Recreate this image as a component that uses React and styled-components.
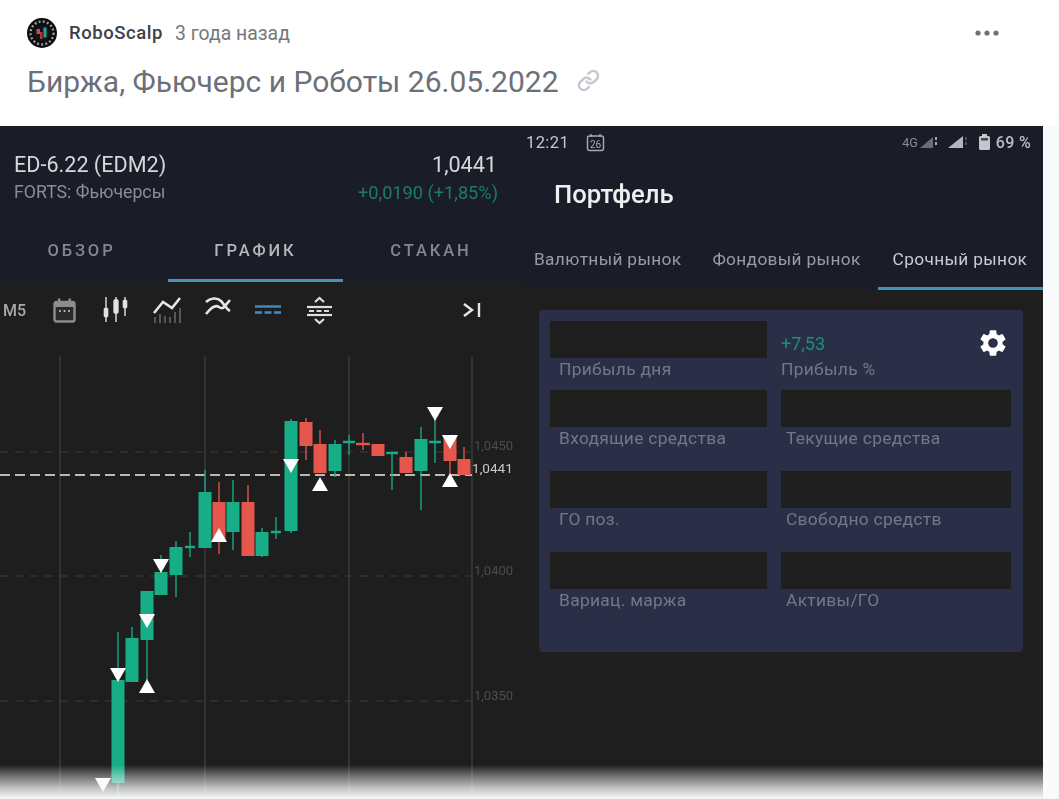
import React from "react";
import styled, { createGlobalStyle, css } from "styled-components";
import { Link } from "lucide-react";
import { MdSettings } from "react-icons/md";

const Global = createGlobalStyle`
  html, body { margin: 0; padding: 0; background: #fff; }
  body { font-family: Roboto, "Noto Sans", sans-serif; }
`;

const soft = css`filter: blur(0.55px);`;

const Page = styled.div`
  position: relative;
  width: 1059px;
  height: 799px;
  overflow: hidden;
  display: flex;
  flex-direction: column;
  background: #fff;
`;
const Header = styled.header`
  height: 126px;
  flex: none;
  box-sizing: border-box;
  padding: 17px 59px 0 27px;
`;
const MetaRow = styled.div`
  display: flex;
  align-items: center;
  height: 32px;
`;
const Avatar = styled.svg`
  width: 30px;
  height: 30px;
  flex: none;
`;
const Author = styled.span`
  margin-left: 12px;
  font-size: 18.5px;
  letter-spacing: 0.55px;
  font-weight: 500;
  color: #3c4048;
`;
const Ago = styled.span`
  margin-left: 12px;
  font-size: 19.4px;
  color: #74787f;
`;
const Dots = styled.svg`
  margin-left: auto;
  width: 26px;
  height: 8px;
`;
const TitleRow = styled.div`
  display: flex;
  align-items: center;
  margin-top: 15px;
  height: 34px;
`;
const Title = styled.h1`
  margin: 0;
  font-size: 30px;
  font-weight: 400;
  color: #6c7079;
  white-space: nowrap;
`;
const LinkMark = styled(Link)`
  margin-left: 18px;
  margin-top: -2px;
  color: #c5c8cf;
`;

const Video = styled.main`
  flex: 1;
  display: flex;
  background: #f9fafb;
  min-height: 0;
`;
const LeftPane = styled.section`
  width: 520px;
  flex: none;
  display: flex;
  flex-direction: column;
  background: #1e1e1e;
`;
const RightPane = styled.section`
  width: 523px;
  flex: none;
  display: flex;
  flex-direction: column;
  background: #1e1e1e;
`;
const LeftHead = styled.div`
  height: 156px;
  flex: none;
  box-sizing: border-box;
  background: #1a1d27;
  display: flex;
  flex-direction: column;
`;
const Quote = styled.div`
  display: grid;
  grid-template-columns: 1fr auto;
  padding: 25px 23px 0 14px;
  row-gap: 2px;
  align-items: center;
`;
const Symbol = styled.div`
  font-size: 21.6px;
  line-height: 28px;
  color: #d6d7da;
  ${soft}
`;
const Market = styled.div`
  font-size: 17.7px;
  line-height: 23px;
  color: #8b8d94;
  ${soft}
`;
const Price = styled(Symbol)`
  text-align: right;
`;
const Change = styled(Market)`
  text-align: right;
  font-size: 18.2px;
  color: #1b7d62;
  margin-right: -1px;
`;
const LeftTabs = styled.div`
  margin-top: auto;
  display: grid;
  grid-template-columns: 168px 175px 176px;
  height: 59px;
`;
const LeftTab = styled.div`
  display: flex;
  align-items: center;
  justify-content: center;
  box-sizing: border-box;
  padding: 0 ${(p) => (p.$first ? "5px" : "0")} 1px 0;
  font-size: 16.5px;
  font-weight: 500;
  letter-spacing: 2.9px;
  color: ${(p) => (p.$active ? "#b4b6ba" : "#85878e")};
  border-bottom: 3px solid ${(p) => (p.$active ? "#4a93b8" : "transparent")};
  span { ${soft} }
`;
const Toolbar = styled.div`
  height: 58px;
  flex: none;
  display: flex;
  align-items: center;
  padding-left: 3px;
  box-sizing: border-box;
  padding-bottom: 2px;
`;
const Interval = styled.span`
  font-size: 16px;
  font-weight: 500;
  color: #a9a9a9;
  width: 26px;
  ${soft}
`;
const Tool = styled.svg`
  flex: none;
  margin-left: ${(p) => p.$gap}px;
  overflow: visible;
  ${soft}
`;
const Chart = styled.svg`
  display: block;
  flex: 1;
  min-height: 0;
  width: 520px;
  ${soft}
`;

const StatusBar = styled.div`
  height: 32px;
  display: flex;
  align-items: center;
  padding: 0 12px 0 6px;
  color: #c4c6cc;
  ${soft}
`;
const Clock = styled.span`
  font-size: 16.5px;
  letter-spacing: 0.4px;
`;
const DateIcon = styled.svg`
  margin-left: 17px;
  width: 19px;
  height: 19px;
`;
const StatusGroup = styled.div`
  margin-left: auto;
  display: flex;
  align-items: center;
`;
const Net = styled.span`
  font-size: 12.5px;
  color: #8a8c93;
`;
const Signals = styled.svg`
  width: 50px;
  height: 16px;
`;
const Battery = styled.svg`
  width: 11px;
  height: 16px;
  margin-left: 11px;
`;
const Percent = styled.span`
  font-size: 16px;
  font-weight: 500;
  margin-left: 6px;
  letter-spacing: 0.3px;
  color: #bcbec4;
`;
const RightHead = styled.div`
  background: #1a1d27;
  height: 164px;
  flex: none;
  display: flex;
  flex-direction: column;
`;
const PortfolioTitle = styled.h2`
  margin: 16px 0 0 34px;
  font-size: 25.7px;
  line-height: 40px;
  font-weight: 500;
  color: #efeff1;
  ${soft}
`;
const Markets = styled.div`
  margin-top: auto;
  display: flex;
  height: 55px;
  padding-left: 14px;
`;
const MarketTab = styled.div`
  box-sizing: border-box;
  height: 100%;
  display: flex;
  align-items: center;
  font-size: 17.3px;
  letter-spacing: 0.35px;
  white-space: nowrap;
  padding-bottom: 7px;
  margin-right: 31px;
  color: ${(p) => (p.$active ? "#c9cbd0" : "#9a9ca2")};
  ${(p) =>
    p.$active &&
    css`
      flex: 1;
      margin: 0 0 0 -14px;
      padding-left: 15px;
      border-bottom: 3px solid #3f93b5;
      padding-bottom: 4px;
    `}
  span { ${soft} }
`;
const Panel = styled.div`
  position: relative;
  margin: 20px 0 0 19px;
  width: 484px;
  height: 342px;
  box-sizing: border-box;
  padding: 11px 12px 0 11px;
  background: #2a2f47;
  border-radius: 4px;
  display: grid;
  grid-template-columns: 217px 230px;
  column-gap: 14px;
  grid-template-rows: 69px 81px 81px 81px;
  align-content: start;
`;
const Cell = styled.div`
  display: flex;
  flex-direction: column;
`;
const Masked = styled.div`
  height: 36.5px;
  flex: none;
  background: #1e1e1e;
`;
const Gain = styled.div`
  height: 36.5px;
  flex: none;
  box-sizing: border-box;
  padding-top: 13px;
  font-size: 18px;
  line-height: 20px;
  color: #1c8f7a;
  ${soft}
`;
const Caption = styled.div`
  margin: 1px 0 0 ${(p) => p.$indent}px;
  font-size: 17.4px;
  line-height: 20px;
  letter-spacing: 0.3px;
  white-space: nowrap;
  color: #737789;
  ${soft}
`;
const Gear = styled(MdSettings)`
  position: absolute;
  top: 17px;
  right: 14px;
  color: #fff;
`;
const Fade = styled.div`
  position: absolute;
  left: 0;
  right: 0;
  bottom: 0;
  height: 34px;
  background: linear-gradient(to bottom, rgba(249, 250, 251, 0) 0%, rgba(249, 250, 251, 0.35) 30%, rgba(249, 250, 251, 0.75) 68%, rgba(249, 250, 251, 1) 100%);
  pointer-events: none;
`;

const GREEN = "#17ad87";
const RED = "#e5574d";
const candles = [
  [118, 680, 783, 632, 799, GREEN],
  [132, 638, 682, 627, 682, GREEN],
  [147, 591, 640, 591, 692, GREEN],
  [161, 572, 595, 555, 595, GREEN],
  [176, 547, 575, 541, 597, GREEN],
  [205, 492, 548, 470, 548, GREEN],
  [219, 502, 542, 482, 554, RED],
  [233, 502, 532, 480, 550, GREEN],
  [248, 502, 556, 485, 556, RED],
  [262, 532, 556, 528, 557, GREEN],
  [291, 421, 531, 419, 533, GREEN],
  [306, 422, 446, 418, 460, RED],
  [320, 444, 473, 430, 473, RED],
  [335, 444, 471, 440, 477, GREEN],
  [378, 444, 456, 444, 456, RED],
  [406, 457, 473, 452, 473, RED],
  [421, 439, 471, 427, 510, GREEN],
  [450, 437, 461, 437, 475, RED],
  [464, 459, 475, 447, 475, RED],
];
const crosses = [
  [190, 532, 557, 547, 5, GREEN],
  [276, 517, 539, 532, 5, GREEN],
  [349, 435, 455, 442, 6, GREEN],
  [363, 433, 450, 444, 7, RED],
  [392, 452, 490, 453, 6, GREEN],
  [435, 418, 463, 442, 6, GREEN],
];
const downs = [[291, 459], [435, 407], [450, 435], [118, 668], [147, 614], [161, 559], [103, 778]];
const ups = [[320, 491], [450, 487], [147, 693], [219, 542]];

function ChartArt() {
  return (
    <Chart viewBox="0 340 520 459" preserveAspectRatio="none">
      {[60, 205, 349, 472].map((x) => (
        <line key={x} x1={x} x2={x} y1="356" y2="799" stroke="#3b3b3b" strokeWidth="1.4" />
      ))}
      {[452, 576, 701].map((y) => (
        <line key={y} x1="0" x2="472" y1={y} y2={y} stroke="#3d3d3d" strokeWidth="1.2" strokeDasharray="8 7" />
      ))}
      <line x1="0" x2="472" y1="475" y2="475" stroke="#b9b9b4" strokeWidth="1.8" strokeDasharray="10 5" />
      {candles.map(([x, t, b, wt, wb, c]) => (
        <g key={x}>
          <line x1={x} x2={x} y1={wt} y2={wb} stroke={c} strokeWidth="1.6" opacity="0.85" />
          <rect x={x - 6.5} y={t} width="13" height={b - t} fill={c} />
        </g>
      ))}
      {crosses.map(([x, t, b, y, w, c]) => (
        <g key={x}>
          <line x1={x} x2={x} y1={t} y2={b} stroke={c} strokeWidth="1.6" opacity="0.85" />
          <rect x={x - w} y={y - 1.2} width={w * 2} height="2.4" fill={c} />
        </g>
      ))}
      {downs.map(([x, y]) => (
        <polygon key={`d${x}`} points={`${x - 8},${y} ${x + 8},${y} ${x},${y + 14}`} fill="#fff" />
      ))}
      {ups.map(([x, y]) => (
        <polygon key={`u${x}`} points={`${x - 8},${y} ${x + 8},${y} ${x},${y - 14}`} fill="#fff" />
      ))}
      <g fontFamily="Roboto, sans-serif" fontSize="13">
        <text x="474" y="450" fill="#4d4d4d">1,0450</text>
        <text x="472" y="472.5" fontSize="13.6" fill="#c9c9c9">1,0441</text>
        <text x="474" y="575" fill="#4d4d4d">1,0400</text>
        <text x="474" y="700" fill="#4d4d4d">1,0350</text>
      </g>
    </Chart>
  );
}

const cells = [
  ["Входящие средства", "Текущие средства"],
  ["ГО поз.", "Свободно средств"],
  ["Вариац. маржа", "Активы/ГО"],
];

export default function App() {
  return (
    <Page>
      <Global />
      <Header>
        <MetaRow>
          <Avatar viewBox="0 0 30 30">
            <circle cx="15" cy="15" r="15" fill="#0c0c0e" />
            <circle cx="15" cy="15" r="11.5" fill="none" stroke="#9a9a9a" strokeWidth="2.4" strokeDasharray="2 2.2" />
            <circle cx="15" cy="15" r="8.5" fill="#0d1420" />
            <rect x="9.5" y="11" width="3.5" height="5" fill="#d8453c" />
            <rect x="13" y="14" width="2.5" height="7" fill="#b5382f" />
            <rect x="16.5" y="9.5" width="3" height="10" fill="#22a78a" />
          </Avatar>
          <Author>RoboScalp</Author>
          <Ago>3 года назад</Ago>
          <Dots viewBox="0 0 26 8">
            <circle cx="4" cy="4" r="2.6" fill="#6d7078" />
            <circle cx="13" cy="4" r="2.6" fill="#6d7078" />
            <circle cx="22" cy="4" r="2.6" fill="#6d7078" />
          </Dots>
        </MetaRow>
        <TitleRow>
          <Title>Биржа, Фьючерс и Роботы 26.05.2022</Title>
          <LinkMark size={23} strokeWidth={2.6} />
        </TitleRow>
      </Header>
      <Video>
        <LeftPane>
          <LeftHead>
            <Quote>
              <Symbol>ED-6.22 (EDM2)</Symbol>
              <Price>1,0441</Price>
              <Market>FORTS: Фьючерсы</Market>
              <Change>+0,0190 (+1,85%)</Change>
            </Quote>
            <LeftTabs>
              <LeftTab $first><span>ОБЗОР</span></LeftTab>
              <LeftTab $active><span>ГРАФИК</span></LeftTab>
              <LeftTab><span>СТАКАН</span></LeftTab>
            </LeftTabs>
          </LeftHead>
          <Toolbar>
            <Interval>M5</Interval>
            <Tool $gap={24} width="23" height="25" viewBox="0 0 23 25">
              <rect x="1.5" y="4" width="20" height="19.5" rx="2" fill="#2a2a2a" stroke="#8d8d8d" strokeWidth="2.4" />
              <rect x="1.5" y="4" width="20" height="5" fill="#8d8d8d" />
              <rect x="5" y="0.5" width="2.4" height="4" fill="#8d8d8d" />
              <rect x="15.5" y="0.5" width="2.4" height="4" fill="#8d8d8d" />
              <circle cx="7" cy="13" r="1" fill="#ccc" /><circle cx="11.5" cy="13" r="1" fill="#ccc" /><circle cx="16" cy="13" r="1" fill="#ccc" />
            </Tool>
            <Tool $gap={27} width="26" height="26" viewBox="0 0 26 26" stroke="#e2e2e2" fill="#e2e2e2">
              <line x1="3" x2="3" y1="0" y2="25" strokeWidth="1.4" />
              <rect x="1" y="11" width="4" height="9" rx="1" strokeWidth="0.6" />
              <line x1="13" x2="13" y1="0" y2="25" strokeWidth="1.4" />
              <rect x="11" y="3" width="4" height="13" rx="1" fill="#e2e2e2" strokeWidth="1.3" />
              <line x1="22" x2="22" y1="0" y2="19" strokeWidth="1.4" />
              <rect x="20" y="3" width="4" height="8" rx="1" strokeWidth="0.6" />
            </Tool>
            <Tool $gap={23} width="29" height="26" viewBox="0 0 29 26">
              <g stroke="#666" strokeWidth="1.6">
                <line x1="3" x2="3" y1="20" y2="26" />
                <line x1="8" x2="8" y1="17" y2="26" />
                <line x1="13" x2="13" y1="19" y2="26" />
                <line x1="18" x2="18" y1="20" y2="26" />
                <line x1="23" x2="23" y1="15" y2="26" />
                <line x1="28" x2="28" y1="11" y2="26" />
              </g>
              <polyline points="2,16 11,5 20,11 28,1" fill="none" stroke="#e8e8e8" strokeWidth="2.6" />
            </Tool>
            <Tool $gap={24} width="26" height="26" viewBox="0 0 26 26">
              <path d="M1 5C5 1 12 0 16 4S21 12 25 14" fill="none" stroke="#e4e4e4" strokeWidth="2.6" />
              <path d="M1 17C5 12 10 7 14 10S19 10 25 3" fill="none" stroke="#e4e4e4" strokeWidth="2.6" />
            </Tool>
            <Tool $gap={24} width="26" height="10" viewBox="0 0 26 10">
              <line x1="0" x2="26" y1="1.5" y2="1.5" stroke="#3f8dc2" strokeWidth="2.4" />
              <line x1="0" x2="26" y1="7.5" y2="7.5" stroke="#3f8dc2" strokeWidth="2.6" strokeDasharray="7 2.5" />
            </Tool>
            <Tool $gap={26} width="25" height="27" viewBox="0 0 25 27" fill="none" stroke="#dedede">
              <polyline points="8,5 12.5,1 17,5" strokeWidth="2.2" />
              <line x1="0" x2="25" y1="10" y2="10" strokeWidth="2.2" />
              <line x1="2" x2="23" y1="14" y2="14" strokeWidth="2.2" strokeDasharray="5 2.5" />
              <line x1="0" x2="25" y1="18" y2="18" strokeWidth="2.2" />
              <polyline points="8,22 12.5,26 17,22" strokeWidth="2.2" />
            </Tool>
            <Tool $gap={131} width="18" height="16" viewBox="0 0 18 16" fill="none" stroke="#e6e6e6" strokeWidth="2.4">
              <polyline points="1,2 9,8 1,14" />
              <line x1="16" x2="16" y1="1" y2="15" />
            </Tool>
          </Toolbar>
          <ChartArt />
        </LeftPane>
        <RightPane>
          <RightHead>
            <StatusBar>
              <Clock>12:21</Clock>
              <DateIcon viewBox="0 0 19 19" fill="none" stroke="#a9abb1">
                <rect x="1.5" y="3" width="16" height="14.5" rx="2" strokeWidth="1.4" />
                <text x="9.5" y="14.5" fontSize="10" fontFamily="Roboto, sans-serif" fill="#a9abb1" stroke="none" textAnchor="middle">26</text>
                <line x1="5" x2="5" y1="1" y2="4" strokeWidth="1.4" />
                <line x1="14" x2="14" y1="1" y2="4" strokeWidth="1.4" />
              </DateIcon>
              <StatusGroup>
                <Net>4G</Net>
                <Signals viewBox="0 0 50 16">
                  <polygon points="2,14 15,14 15,3" fill="#6a6c73" />
                  <rect x="17" y="3" width="2" height="3" fill="#a4a6ac" />
                  <rect x="17" y="8" width="2" height="3" fill="#a4a6ac" />
                  <polygon points="30,14 45,14 45,2" fill="#b4b6bc" />
                  <rect x="47" y="3" width="2" height="3" fill="#4c4e54" />
                  <rect x="47" y="8" width="2" height="3" fill="#4c4e54" />
                </Signals>
                <Battery viewBox="0 0 11 16">
                  <rect x="3" y="0" width="5" height="2" fill="#c4c6cc" />
                  <rect x="0" y="2" width="11" height="14" rx="1.5" fill="#c4c6cc" />
                  <rect x="2" y="4" width="7" height="2.5" fill="#44464c" />
                </Battery>
                <Percent>69 %</Percent>
              </StatusGroup>
            </StatusBar>
            <PortfolioTitle>Портфель</PortfolioTitle>
            <Markets>
              <MarketTab><span>Валютный рынок</span></MarketTab>
              <MarketTab><span>Фондовый рынок</span></MarketTab>
              <MarketTab $active><span>Срочный рынок</span></MarketTab>
            </Markets>
          </RightHead>
          <Panel>
            <Gear size={32} />
            <Cell>
              <Masked />
              <Caption $indent={9}>Прибыль дня</Caption>
            </Cell>
            <Cell>
              <Gain>+7,53</Gain>
              <Caption $indent={0}>Прибыль %</Caption>
            </Cell>
            {cells.map(([a, b]) => (
              <React.Fragment key={a}>
                <Cell>
                  <Masked />
                  <Caption $indent={9}>{a}</Caption>
                </Cell>
                <Cell>
                  <Masked />
                  <Caption $indent={5}>{b}</Caption>
                </Cell>
              </React.Fragment>
            ))}
          </Panel>
        </RightPane>
      </Video>
      <Fade />
    </Page>
  );
}
